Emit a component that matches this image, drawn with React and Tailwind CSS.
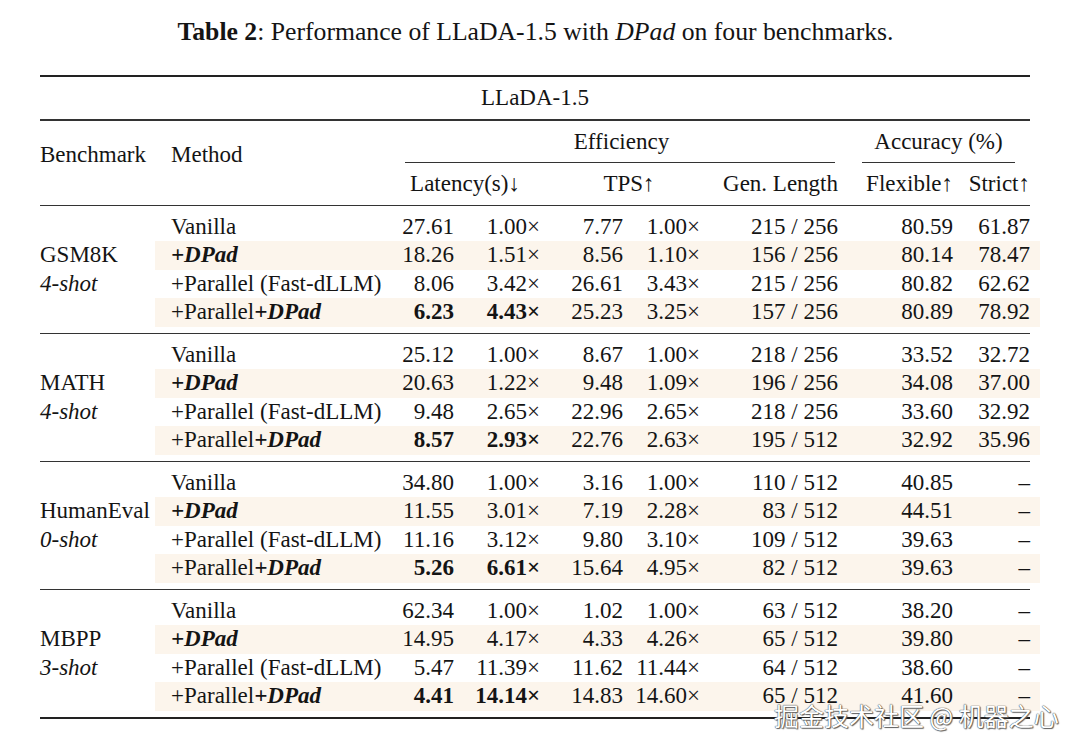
const ROWS = [
  {
    bench: "GSM8K",
    shot: "4-shot",
    rows: [
      ["27.61", "1.00×", "7.77", "1.00×", "215 / 256", "80.59", "61.87"],
      ["18.26", "1.51×", "8.56", "1.10×", "156 / 256", "80.14", "78.47"],
      ["8.06", "3.42×", "26.61", "3.43×", "215 / 256", "80.82", "62.62"],
      ["6.23", "4.43×", "25.23", "3.25×", "157 / 256", "80.89", "78.92"],
    ],
  },
  {
    bench: "MATH",
    shot: "4-shot",
    rows: [
      ["25.12", "1.00×", "8.67", "1.00×", "218 / 256", "33.52", "32.72"],
      ["20.63", "1.22×", "9.48", "1.09×", "196 / 256", "34.08", "37.00"],
      ["9.48", "2.65×", "22.96", "2.65×", "218 / 256", "33.60", "32.92"],
      ["8.57", "2.93×", "22.76", "2.63×", "195 / 512", "32.92", "35.96"],
    ],
  },
  {
    bench: "HumanEval",
    shot: "0-shot",
    rows: [
      ["34.80", "1.00×", "3.16", "1.00×", "110 / 512", "40.85", "–"],
      ["11.55", "3.01×", "7.19", "2.28×", "83 / 512", "44.51", "–"],
      ["11.16", "3.12×", "9.80", "3.10×", "109 / 512", "39.63", "–"],
      ["5.26", "6.61×", "15.64", "4.95×", "82 / 512", "39.63", "–"],
    ],
  },
  {
    bench: "MBPP",
    shot: "3-shot",
    rows: [
      ["62.34", "1.00×", "1.02", "1.00×", "63 / 512", "38.20", "–"],
      ["14.95", "4.17×", "4.33", "4.26×", "65 / 512", "39.80", "–"],
      ["5.47", "11.39×", "11.62", "11.44×", "64 / 512", "38.60", "–"],
      ["4.41", "14.14×", "14.83", "14.60×", "65 / 512", "41.60", "–"],
    ],
  },
]

// right-aligned value columns, widths in px
const COL_W = ["w-[64px]", "w-[86px]", "w-[83px]", "w-[77px]", "w-[138px]", "w-[115px]", "w-[77px]"]

function MethodLabel({ i }) {
  if (i === 0) return <span>Vanilla</span>
  if (i === 1)
    return <span className="font-bold italic">+DPad</span>
  if (i === 2) return <span>+Parallel (Fast-dLLM)</span>
  return (
    <span>
      +Parallel<span className="font-bold italic">+DPad</span>
    </span>
  )
}

function DataRow({ vals, i }) {
  const shaded = i % 2 === 1
  return (
    <div
      className={`-ml-[16px] -mr-[10px] flex h-[28.5px] items-center pl-[16px] pr-[10px] ${
        shaded ? "bg-[#fcf5ec]" : ""
      }`}
    >
      <div className="w-[219px] whitespace-nowrap">
        <MethodLabel i={i} />
      </div>
      {vals.map((v, k) => (
        <div
          key={k}
          className={`${COL_W[k]} whitespace-nowrap text-right ${
            i === 3 && k < 2 ? "font-bold" : ""
          }`}
        >
          {v}
        </div>
      ))}
    </div>
  )
}

export default function App() {
  return (
    <div className="relative h-[748px] w-[1080px] overflow-hidden bg-white font-[family-name:'Liberation_Serif','Times_New_Roman',serif] text-[23px] text-[#141414]">
      <p className="pr-[9px] pt-[18px] text-center text-[25.7px] leading-[28px]">
        <span className="font-bold">Table 2</span>: Performance of LLaDA-1.5 with{" "}
        <span className="italic">DPad</span> on four benchmarks.
      </p>

      <div className="ml-[40px] mt-[29px] w-[990px]">
        <div className="h-[2px] bg-[#222]" />
        <div className="flex h-[42px] items-center justify-center leading-[28px]">LLaDA-1.5</div>
        <div className="h-[1.5px] bg-[#333]" />

        {/* header */}
        <div className="flex h-[84px] leading-[28px]">
          <div className="w-[131px] pt-[20px]">Benchmark</div>
          <div className="w-[219px] pt-[20px]">Method</div>
          <div className="flex flex-col">
            <div className="flex pt-[7px]">
              <div className="w-[448px] pl-[15px]">
                <div className="text-center">Efficiency</div>
                <div className="mt-[6px] h-px w-[430px] bg-[#333]" />
              </div>
              <div className="w-[192px] pl-[24px]">
                <div className="w-[153px] text-center">Accuracy (%)</div>
                <div className="mt-[6px] h-px w-[153px] bg-[#333]" />
              </div>
            </div>
            <div className="mt-[7px] flex whitespace-nowrap">
              <div className="w-[150px] text-center">Latency(s)↓</div>
              <div className="w-[160px] pl-[18px] text-center">TPS↑</div>
              <div className="w-[138px] text-right">Gen. Length</div>
              <div className="w-[115px] text-right">Flexible↑</div>
              <div className="w-[77px] text-right">Strict↑</div>
            </div>
          </div>
        </div>

        {ROWS.map((b, bi) => (
          <div key={b.bench}>
            <div className="h-[1.5px] bg-[#333]" />
            <div className="flex pb-[6px] pt-[6.5px] leading-[28.5px]">
              <div className="w-[131px] pt-[28.5px]">
                <div>{b.bench}</div>
                <div className="italic">{b.shot}</div>
              </div>
              <div className="w-[859px]">
                {b.rows.map((r, i) => (
                  <DataRow key={i} vals={r} i={i} />
                ))}
              </div>
            </div>
            {bi === ROWS.length - 1 ? <div className="h-[2px] bg-[#222]" /> : null}
          </div>
        ))}
      </div>

      <div className="absolute left-[774px] top-[698px] whitespace-nowrap font-[family-name:'Noto_Sans_CJK_SC',sans-serif] text-[25px] leading-[34px] text-white [text-shadow:0_0_1px_#444,0_0_1px_#444,1px_1px_1px_#666]">
        掘金技术社区 @ 机器之心
      </div>
    </div>
  )
}
